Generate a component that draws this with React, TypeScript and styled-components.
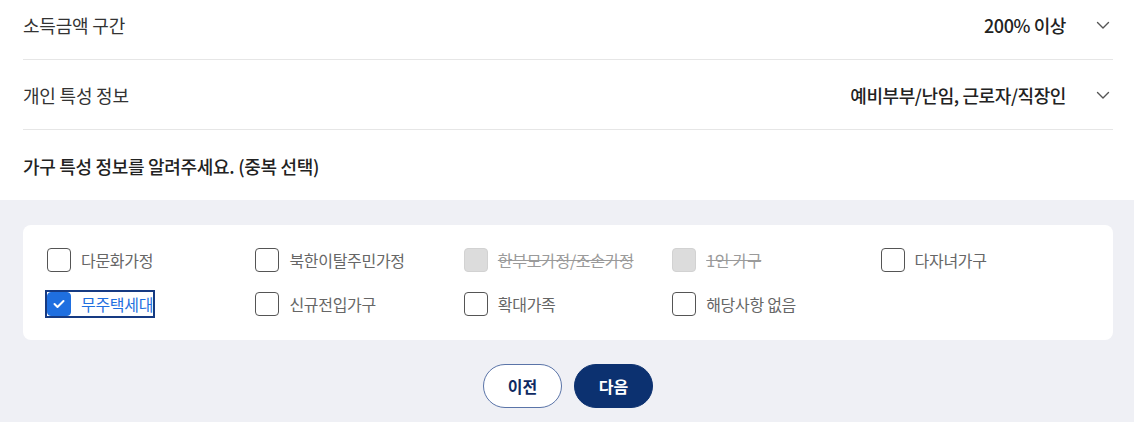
import React, { useState } from "react";
import styled, { createGlobalStyle, css } from "styled-components";

const Global = createGlobalStyle`
  html, body { margin: 0; padding: 0; background: #ffffff; }
  body { font-family: "Noto Sans CJK KR", "Noto Sans", sans-serif; color: #222; overflow: hidden; }
  * { box-sizing: border-box; }
`;

const Page = styled.div`
  width: 1134px;
  margin-top: -10px;
`;

const Top = styled.section`
  padding: 0 21px 0 23px;
  background: #fff;
`;

const Row = styled.div`
  height: 70px;
  display: flex;
  align-items: center;
  justify-content: space-between;
  border-bottom: 1px solid #e6e6e6;
`;

const Label = styled.span`
  font-size: 18px;
  color: #333;
  letter-spacing: -0.2px;
`;

const ValueWrap = styled.div`
  display: flex;
  align-items: center;
  gap: 30px;
  padding-right: 3px;
`;

const Value = styled.span`
  font-size: 18px;
  font-weight: 500;
  color: #222;
  letter-spacing: -0.4px;
`;

const Heading = styled.div`
  height: 70px;
  display: flex;
  align-items: center;
  font-size: 18px;
  font-weight: 500;
  color: #222;
  letter-spacing: -0.3px;
  padding-top: 2px;
`;

const Gray = styled.section`
  background: #eff0f5;
  padding: 25px 21px 20px 23px;
  min-height: 230px;
`;

const Card = styled.div`
  background: #fff;
  border-radius: 8px;
  padding: 23px 24px 24px 24px;
  display: grid;
  grid-template-columns: repeat(5, 1fr);
  row-gap: 20px;
`;

const Item = styled.label<{ $focus?: boolean }>`
  display: inline-flex;
  align-items: center;
  gap: 10px;
  height: 24px;
  justify-self: start;
  cursor: pointer;
  position: relative;
  ${(p) =>
    p.$focus &&
    css`
      outline: 2px solid #163a82;
      outline-offset: 0px;
    `}
`;

const Box = styled.span<{ $checked?: boolean; $disabled?: boolean }>`
  width: 24px;
  height: 24px;
  border-radius: 4px;
  border: 1px solid #555;
  background: #fff;
  display: flex;
  align-items: center;
  justify-content: center;
  flex-shrink: 0;
  ${(p) =>
    p.$disabled &&
    css`
      background: #dcdcdc;
      border-color: #d2d2d2;
    `}
  ${(p) =>
    p.$checked &&
    css`
      background: #1f6fe0;
      border-color: #1f6fe0;
    `}
`;

const Text = styled.span<{ $checked?: boolean; $disabled?: boolean }>`
  font-size: 16px;
  color: #666;
  letter-spacing: -0.3px;
  white-space: nowrap;
  ${(p) =>
    p.$disabled &&
    css`
      color: #9a9a9a;
      text-decoration: line-through;
    `}
  ${(p) =>
    p.$checked &&
    css`
      color: #1f6fe0;
    `}
`;

const Buttons = styled.div`
  display: flex;
  justify-content: center;
  gap: 12px;
  margin-top: 24px;
`;

const Btn = styled.button<{ $primary?: boolean }>`
  width: 79px;
  height: 44px;
  border-radius: 22px;
  font-family: inherit;
  font-size: 16px;
  font-weight: 600;
  cursor: pointer;
  border: 1px solid #5a74a8;
  background: #fff;
  color: #0e2a62;
  ${(p) =>
    p.$primary &&
    css`
      background: #0c3170;
      border-color: #0c3170;
      color: #fff;
    `}
`;

const Chevron = () => (
  <svg width="14" height="14" viewBox="0 0 14 14" fill="none">
    <path d="M1.5 4.5 L7 10 L12.5 4.5" stroke="#555" strokeWidth="1.4" strokeLinecap="round" strokeLinejoin="round" />
  </svg>
);

const Check = () => (
  <svg width="12" height="10" viewBox="0 0 12 10" fill="none">
    <path d="M1.5 5 L4.5 8 L10.5 2" stroke="#fff" strokeWidth="2" strokeLinecap="round" strokeLinejoin="round" />
  </svg>
);

type Opt = { label: string; disabled?: boolean };

const options: Opt[] = [
  { label: "다문화가정" },
  { label: "북한이탈주민가정" },
  { label: "한부모가정/조손가정", disabled: true },
  { label: "1인 가구", disabled: true },
  { label: "다자녀가구" },
  { label: "무주택세대" },
  { label: "신규전입가구" },
  { label: "확대가족" },
  { label: "해당사항 없음" },
];

export default function App() {
  const [checked, setChecked] = useState<string[]>(["무주택세대"]);
  const toggle = (o: Opt) => {
    if (o.disabled) return;
    setChecked((c) => (c.includes(o.label) ? c.filter((x) => x !== o.label) : [...c, o.label]));
  };
  return (
    <Page>
      <Global />
      <Top>
        <Row>
          <Label>소득금액 구간</Label>
          <ValueWrap>
            <Value>200% 이상</Value>
            <Chevron />
          </ValueWrap>
        </Row>
        <Row>
          <Label>개인 특성 정보</Label>
          <ValueWrap>
            <Value>예비부부/난임, 근로자/직장인</Value>
            <Chevron />
          </ValueWrap>
        </Row>
        <Heading>가구 특성 정보를 알려주세요. (중복 선택)</Heading>
      </Top>
      <Gray>
        <Card>
          {options.map((o) => {
            const on = checked.includes(o.label);
            return (
              <Item key={o.label} $focus={o.label === "무주택세대"} onClick={() => toggle(o)}>
                <Box $checked={on} $disabled={o.disabled}>{on && <Check />}</Box>
                <Text $checked={on} $disabled={o.disabled}>{o.label}</Text>
              </Item>
            );
          })}
        </Card>
        <Buttons>
          <Btn>이전</Btn>
          <Btn $primary>다음</Btn>
        </Buttons>
      </Gray>
    </Page>
  );
}
